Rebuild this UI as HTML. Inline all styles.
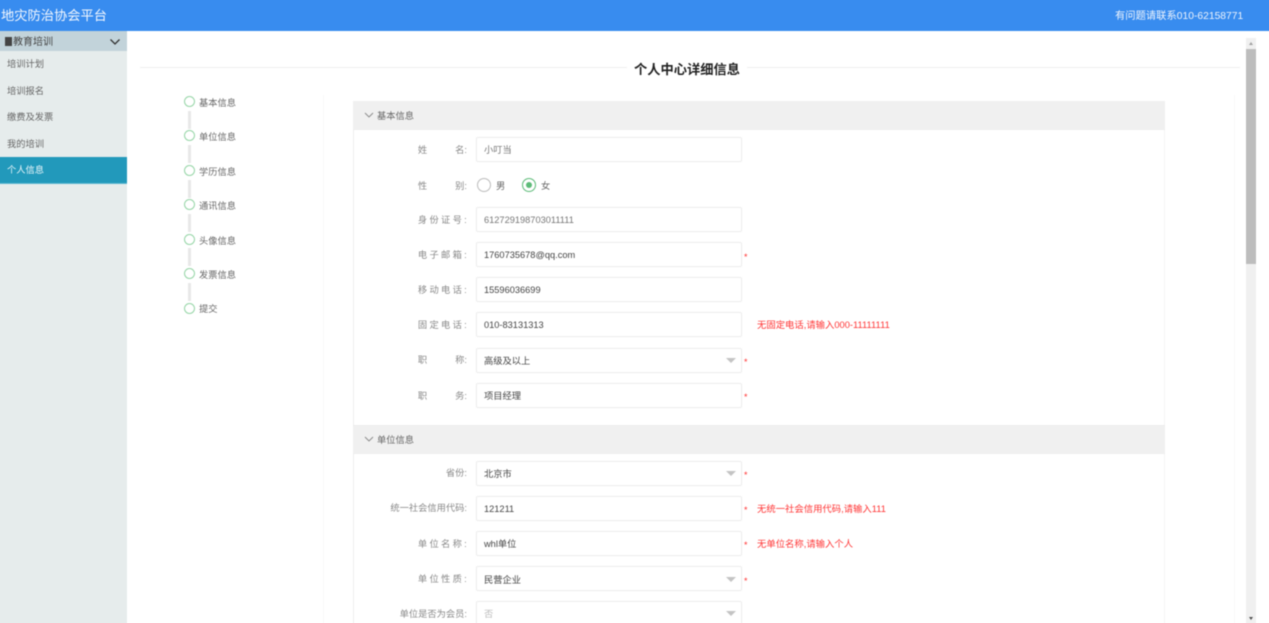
<!DOCTYPE html>
<html lang="zh">
<head>
<meta charset="utf-8">
<title>个人中心详细信息</title>
<style>
*{box-sizing:border-box}
html,body{margin:0;padding:0;width:1269px;height:623px;overflow:hidden;background:#fff}
body{font-family:"Liberation Sans","Noto Sans CJK SC",sans-serif;font-size:9.25px;color:#555}
#o{position:absolute;left:0;top:0;width:1269px;height:623px;overflow:hidden}
#w{position:absolute;left:0;top:0;width:1269px;height:623px;filter:blur(.4px)}
.a{position:absolute;white-space:nowrap}
.t{position:absolute;white-space:nowrap;line-height:14px}
#hdr{left:-6px;top:-6px;width:1281px;height:37px;background:#388cef}
#side{left:-6px;top:31px;width:133px;height:600px;background:#e6ecec}
#subh{left:-6px;top:31px;width:133px;height:20px;background:#c2d3da}
#act{left:-6px;top:157px;width:133px;height:27px;background:#2299bb;border-bottom:1px solid #5fb8d2}
.box{position:absolute;left:476px;width:266px;height:25px;background:#fff;border:1px solid #eeeeee;border-radius:2px;box-shadow:0 0 1px #f2f2f2}
.val{position:absolute;left:484px;white-space:nowrap;line-height:14px;font-size:9.25px;color:#444}
.lab{position:absolute;right:802px;white-space:nowrap;line-height:14px;font-size:9.25px;color:#888;text-align:right}
.sp{letter-spacing:2.3px}
.sec{position:absolute;left:353px;width:812px;height:29px;background:#f0f0f0;border-bottom:1px solid #eeeeee}
.secT{position:absolute;left:377px;line-height:14px;font-size:9.25px;color:#666;white-space:nowrap}
.star{position:absolute;left:744px;color:#f33;font-size:9px;line-height:10px}
.err{position:absolute;left:757px;color:#f33;font-size:9.35px;line-height:14px;white-space:nowrap}
.arr{position:absolute;left:726px;width:0;height:0;border-left:5px solid transparent;border-right:5px solid transparent;border-top:5px solid #c4c4c4}
.dot{position:absolute;left:184px;width:11px;height:11px;border:1px solid #95d5a6;border-radius:50%;background:#fff}
.bar{position:absolute;left:188px;width:3px;height:18px;background:#e8e8e8}
.stp{position:absolute;left:199px;font-size:9.25px;line-height:14px;color:#666;white-space:nowrap}
.mi{position:absolute;left:7px;font-size:9.25px;line-height:14px;color:#666;white-space:nowrap}
</style>
</head>
<body>
<div id="o">
<div id="w">
<div class="a" id="hdr"></div>
<div class="t" style="left:1px;top:7px;font-size:13.25px;line-height:17px;color:#f4f8fe">地灾防治协会平台</div>
<div class="t" style="left:1115px;top:10px;font-size:10.3px;color:#eef4fd">有问题请联系010-62158771</div>

<div class="a" id="side"></div>
<div class="a" id="subh"></div>
<div class="a" style="left:5px;top:37px;width:7px;height:9px;background:#444"></div>
<div class="t" style="left:13px;top:36px;font-size:10px;color:#444">教育培训</div>
<svg class="a" style="left:109px;top:38px" width="12" height="8" viewBox="0 0 12 8"><path d="M1.500 1.500 L6 6 L10.500 1.500" fill="none" stroke="#333" stroke-width="1.300"/></svg>
<div class="mi" style="top:57px">培训计划</div>
<div class="mi" style="top:84px">培训报名</div>
<div class="mi" style="top:110px">缴费及发票</div>
<div class="mi" style="top:137px">我的培训</div>
<div class="a" id="act"></div>
<div class="mi" style="top:163px;color:#eaf6fa">个人信息</div>

<div class="a" style="left:140px;top:67px;width:1100px;height:1px;background:#eee"></div>
<div class="t" style="left:627px;top:60px;width:120px;height:18px;background:#fff"></div>
<div class="t" style="left:634px;top:62px;font-size:13.25px;line-height:16px;font-weight:bold;color:#222">个人中心详细信息</div>

<div class="a" style="left:323px;top:95px;width:912px;height:536px;border-left:1px solid #f8f8f8;border-right:1px solid #f8f8f8"></div>

<div class="bar" style="top:111px"></div>
<div class="bar" style="top:145px"></div>
<div class="bar" style="top:180px"></div>
<div class="bar" style="top:214px"></div>
<div class="bar" style="top:248px"></div>
<div class="bar" style="top:283px"></div>
<div class="dot" style="top:96px"></div><div class="stp" style="top:96px">基本信息</div>
<div class="dot" style="top:130px"></div><div class="stp" style="top:130px">单位信息</div>
<div class="dot" style="top:165px"></div><div class="stp" style="top:165px">学历信息</div>
<div class="dot" style="top:199px"></div><div class="stp" style="top:199px">通讯信息</div>
<div class="dot" style="top:234px"></div><div class="stp" style="top:234px">头像信息</div>
<div class="dot" style="top:268px"></div><div class="stp" style="top:268px">发票信息</div>
<div class="dot" style="top:303px"></div><div class="stp" style="top:302px">提交</div>

<div class="a" style="left:353px;top:101px;width:812px;height:530px;border-left:1px solid #efefef;border-right:1px solid #f5f5f5"></div>

<div class="sec" style="top:101px"></div>
<svg class="a" style="left:364px;top:112px" width="10" height="7" viewBox="0 0 10 7"><path d="M1 1 L5 5 L9 1" fill="none" stroke="#888" stroke-width="0.900"/></svg>
<div class="secT" style="top:109px">基本信息</div>

<div class="lab" style="top:143px"><span style="margin-right:28px">姓</span>名:</div>
<div class="box" style="top:137px"></div><div class="val" style="top:143px;color:#777">小叮当</div>

<div class="lab" style="top:179px"><span style="margin-right:28px">性</span>别:</div>
<div class="a" style="left:477px;top:178px;width:14px;height:14px;border:1px solid #bbb;border-radius:50%;background:#fff"></div>
<div class="t" style="left:496px;top:179px;color:#666">男</div>
<div class="a" style="left:522px;top:178px;width:14px;height:14px;border:1px solid #5dbb78;border-radius:50%;background:#fff"></div>
<div class="a" style="left:526px;top:182px;width:6px;height:6px;border-radius:50%;background:#5dbb78"></div>
<div class="t" style="left:541px;top:179px;color:#666">女</div>

<div class="lab sp" style="top:213px;margin-right:-2px">身份证号:</div>
<div class="box" style="top:207px"></div><div class="val" style="top:213px;color:#777">612729198703011111</div>

<div class="lab sp" style="top:248px;margin-right:-2px">电子邮箱:</div>
<div class="box" style="top:242px"></div><div class="val" style="top:248px">1760735678@qq.com</div>
<div class="star" style="top:252px">*</div>

<div class="lab sp" style="top:283px;margin-right:-2px">移动电话:</div>
<div class="box" style="top:277px"></div><div class="val" style="top:283px">15596036699</div>

<div class="lab sp" style="top:318px;margin-right:-2px">固定电话:</div>
<div class="box" style="top:312px"></div><div class="val" style="top:318px">010-83131313</div>
<div class="err" style="top:318px">无固定电话,请输入000-11111111</div>

<div class="lab" style="top:353px"><span style="margin-right:28px">职</span>称:</div>
<div class="box" style="top:348px"></div><div class="val" style="top:354px">高级及以上</div>
<div class="arr" style="top:358px"></div><div class="star" style="top:357px">*</div>

<div class="lab" style="top:389px"><span style="margin-right:28px">职</span>务:</div>
<div class="box" style="top:383px"></div><div class="val" style="top:389px">项目经理</div>
<div class="star" style="top:392px">*</div>

<div class="sec" style="top:425px;border-top:1px solid #ececec"></div>
<svg class="a" style="left:364px;top:436px" width="10" height="7" viewBox="0 0 10 7"><path d="M1 1 L5 5 L9 1" fill="none" stroke="#888" stroke-width="0.900"/></svg>
<div class="secT" style="top:433px">单位信息</div>

<div class="lab" style="top:466px">省份:</div>
<div class="box" style="top:461px"></div><div class="val" style="top:467px">北京市</div>
<div class="arr" style="top:471px"></div><div class="star" style="top:470px">*</div>

<div class="lab" style="top:501px">统一社会信用代码:</div>
<div class="box" style="top:496px"></div><div class="val" style="top:502px">121211</div>
<div class="star" style="top:505px">*</div>
<div class="err" style="top:502px">无统一社会信用代码,请输入111</div>

<div class="lab sp" style="top:537px;margin-right:-2px">单位名称:</div>
<div class="box" style="top:531px"></div><div class="val" style="top:537px">whl单位</div>
<div class="star" style="top:540px">*</div>
<div class="err" style="top:537px">无单位名称,请输入个人</div>

<div class="lab sp" style="top:572px;margin-right:-2px">单位性质:</div>
<div class="box" style="top:566px"></div><div class="val" style="top:573px">民营企业</div>
<div class="arr" style="top:577px"></div><div class="star" style="top:576px">*</div>

<div class="lab" style="top:607px">单位是否为会员:</div>
<div class="box" style="top:601px"></div><div class="val" style="top:607px;color:#bbb">否</div>
<div class="arr" style="top:611px"></div>

<div class="a" style="left:1246px;top:38px;width:10px;height:593px;background:#f0f0f0"></div>
<div class="a" style="left:1246px;top:49px;width:10px;height:215px;background:#bdbdbd"></div>
<div class="a" style="left:1249px;top:42px;width:0;height:0;border-left:2.500px solid transparent;border-right:2.500px solid transparent;border-bottom:3px solid #a0a0a0"></div>
<div class="a" style="left:1249px;top:617px;width:0;height:0;border-left:2.500px solid transparent;border-right:2.500px solid transparent;border-top:3px solid #505050"></div>
</div>
</div>
</body>
</html>
